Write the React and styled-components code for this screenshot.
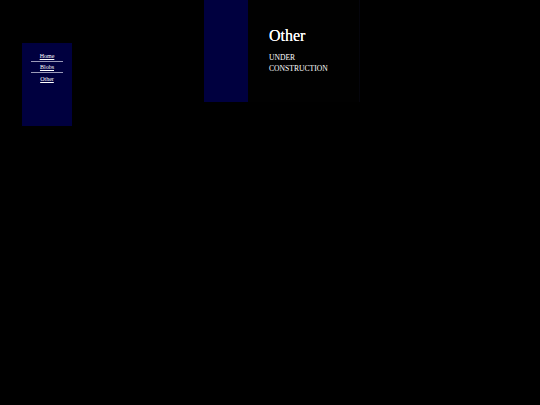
import React from "react";
import styled, { createGlobalStyle } from "styled-components";

const Global = createGlobalStyle`
  html, body { margin: 0; padding: 0; background: #000; }
  body { font-family: "Liberation Serif", "DejaVu Serif", serif; color: #fff; }
`;

const Page = styled.div`
  display: flex;
  align-items: flex-start;
  min-height: 405px;
  background: #000;
`;

const Sidebar = styled.nav`
  margin: 43px 0 0 22px;
  width: 50px;
  height: 83px;
  background: #00003f;
  box-sizing: border-box;
  padding: 8px 9px 0;
`;

const NavList = styled.ul`
  list-style: none;
  margin: 0;
  padding: 0;
`;

const NavItem = styled.li`
  height: 11px;
  box-sizing: border-box;
  border-bottom: ${(p) => (p.$last ? "none" : "1px solid #9a9ab8")};
  display: flex;
  justify-content: center;
  align-items: flex-end;
  padding-bottom: 1px;
`;

const NavLink = styled.a`
  color: #fff;
  font-size: 6px;
  line-height: 7px;
  text-decoration: underline;
`;

const Stripe = styled.div`
  margin-left: 132px;
  width: 44px;
  height: 102px;
  background: #00003f;
`;

const Content = styled.main`
  width: 112px;
  height: 102px;
  box-sizing: border-box;
  padding: 27px 21px 0;
  background: #010101;
  border-right: 1px solid #05050c;
`;

const Title = styled.h1`
  margin: 0;
  font-size: 16px;
  line-height: 18px;
  font-weight: normal;
  text-shadow: 0 0 0.4px #fff;
`;

const Body = styled.p`
  margin: 7px 0 0;
  font-size: 7.6px;
  line-height: 11px;
`;

export default function App() {
  const links = ["Home", "Blobs", "Other"];
  return (
    <>
      <Global />
      <Page>
        <Sidebar>
          <NavList>
            {links.map((l, i) => (
              <NavItem key={l} $last={i === links.length - 1}>
                <NavLink href="#">{l}</NavLink>
              </NavItem>
            ))}
          </NavList>
        </Sidebar>
        <Stripe />
        <Content>
          <Title>Other</Title>
          <Body>UNDER CONSTRUCTION</Body>
        </Content>
      </Page>
    </>
  );
}
